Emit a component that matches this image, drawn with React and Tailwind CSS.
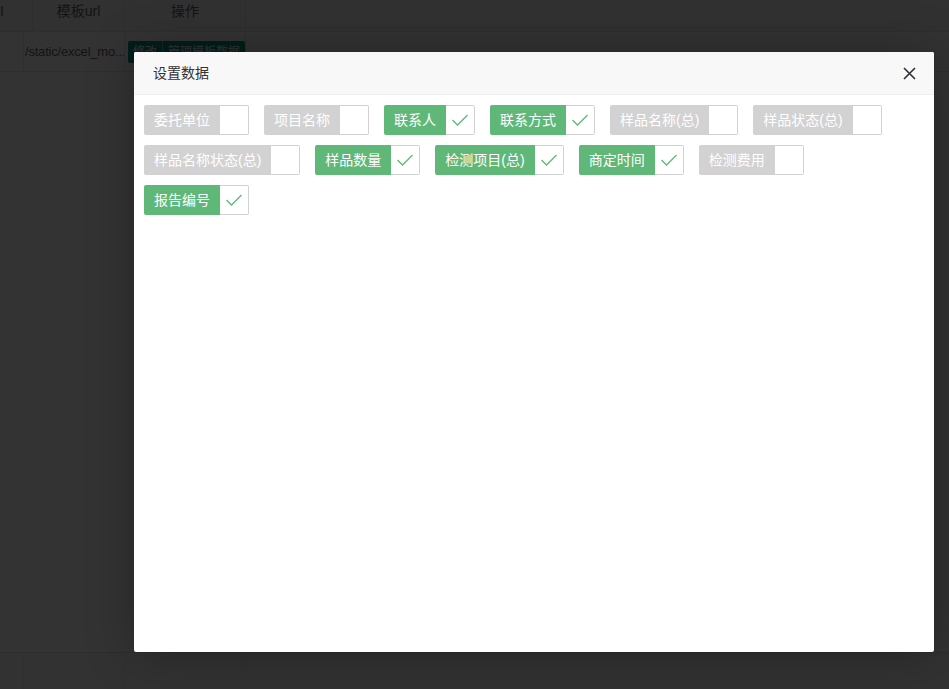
import React, { useState } from 'react';

const initial = [
    { name: '委托单位', on: false },
    { name: '项目名称', on: false },
    { name: '联系人', on: true },
    { name: '联系方式', on: true },
    { name: '样品名称(总)', on: false },
    { name: '样品状态(总)', on: false },
    { name: '样品名称状态(总)', on: false },
    { name: '样品数量', on: true },
    { name: '检测项目(总)', on: true },
    { name: '商定时间', on: true },
    { name: '检测费用', on: false },
    { name: '报告编号', on: true },
];

const Tag = ({ item, onToggle }) => (
    <button onClick={onToggle} className="flex h-[30px] items-stretch rounded-[2px] cursor-pointer">
        <span
            className={`px-[10px] text-[14px] leading-[30px] text-white rounded-l-[2px] whitespace-nowrap ${item.on ? 'bg-[#5fb878]' : 'bg-[#d2d2d2]'}`}
        >
            {item.name}
        </span>
        <span className="w-[29px] flex items-center justify-center bg-white border border-l-0 border-[#d2d2d2] rounded-r-[2px]">
            {item.on && (
                <svg width="18" height="14" viewBox="0 0 18 14" fill="none">
                    <path d="M1.5 7 L6.5 12 L16.5 2" stroke="#5fb878" strokeWidth="1.3" />
                </svg>
            )}
        </span>
    </button>
);

export default function App() {
    const [items, setItems] = useState(initial);

    const toggle = (i) => {
        setItems(items.map((it, idx) => (idx === i ? { ...it, on: !it.on } : it)));
    };

    return (
        <div
            className="relative w-full h-[689px] overflow-hidden bg-white text-[#666]"
            style={{ fontFamily: '"Liberation Sans", "Noto Sans CJK SC", sans-serif' }}
        >
            {/* page underneath (scrolled a little to the right) */}
            <div className="flex h-[32px] bg-[#f2f2f2] text-[14px] border-b border-[#e6e6e6]">
                <div className="w-[33px] border-r border-[#e6e6e6] flex items-center justify-start -mt-[8px] overflow-hidden">
                    <span className="ml-0">I</span>
                </div>
                <div className="w-[92px] border-r border-[#e6e6e6] flex items-center justify-center -mt-[8px]">模板url</div>
                <div className="w-[121px] border-r border-[#e6e6e6] flex items-center justify-center -mt-[8px]">操作</div>
                <div className="flex-1"></div>
            </div>
            <div className="flex h-[40px] text-[14px] border-b border-[#e6e6e6]">
                <div className="w-[24px] border-r border-[#e6e6e6]"></div>
                <div className="w-[101px] border-r border-[#e6e6e6] flex items-center pl-[1px] overflow-hidden whitespace-nowrap">
                    <span className="text-[13px] tracking-[-0.2px]">/static/excel_mo...</span>
                </div>
                <div className="w-[121px] border-r border-[#e6e6e6] flex items-center pl-[3px]">
                    <span className="h-[22px] leading-[22px] px-[5px] text-[12px] text-white bg-[#009688] rounded-l-[2px] border-r border-white/40">修改</span>
                    <span className="h-[22px] leading-[22px] px-[5px] text-[12px] text-white bg-[#009688] rounded-r-[2px]">管理模板数据</span>
                </div>
                <div className="flex-1"></div>
            </div>
            <div className="absolute left-0 right-0 top-[652px] h-[40px] flex border-t border-[#e6e6e6] bg-[#f8f8f8]">
                <div className="w-[24px] border-r border-[#eee]"></div>
                <div className="w-[101px] border-r border-[#eee]"></div>
                <div className="w-[121px] border-r border-[#eee]"></div>
            </div>

            {/* shade */}
            <div className="absolute inset-0 bg-black/80"></div>

            {/* dialog */}
            <div className="absolute left-[134px] top-[52px] w-[800px] h-[600px] bg-white rounded-[2px] shadow-[1px_1px_50px_rgba(0,0,0,0.3)] flex flex-col">
                <div className="h-[43px] flex items-center justify-between pl-[19px] pr-[17px] bg-[#f8f8f8] border-b border-[#eee] rounded-t-[2px]">
                    <span className="text-[14px] text-[#333] pt-[1px]">设置数据</span>
                    <button className="w-[16px] h-[16px] flex items-center justify-center text-[#333]">
                        <svg width="13" height="13" viewBox="0 0 13 13" fill="none">
                            <path d="M1 1 L12 12 M12 1 L1 12" stroke="#2f2f35" strokeWidth="1.6" />
                        </svg>
                    </button>
                </div>
                <div className="flex flex-wrap gap-x-[15px] gap-y-[10px] pl-[10px] pr-[30px] pt-[10px] content-start">
                    {items.map((item, i) => (
                        <Tag key={item.name} item={item} onToggle={() => toggle(i)} />
                    ))}
                </div>
            </div>
        </div>
    );
}
